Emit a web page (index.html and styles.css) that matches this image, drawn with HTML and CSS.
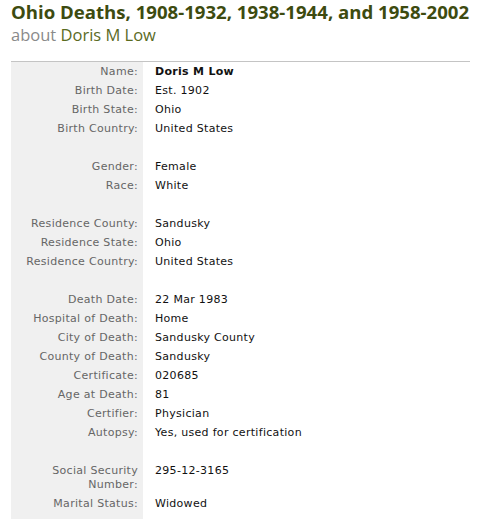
FILE: index.html
```html
<!DOCTYPE html>
<html>
<head>
<meta charset="utf-8">
<link rel="stylesheet" href="styles.css">
</head>
<body>
<div class="page">
  <h1 class="title">Ohio Deaths, 1908-1932, 1938-1944, and 1958-2002</h1>
  <div class="subtitle"><span class="about">about</span> <span class="person">Doris M Low</span></div>
  <table class="record">
    <tr><th>Name:</th><td class="strong">Doris M Low</td></tr>
    <tr><th>Birth Date:</th><td>Est. 1902</td></tr>
    <tr><th>Birth State:</th><td>Ohio</td></tr>
    <tr><th>Birth Country:</th><td>United States</td></tr>
    <tr class="gap"><th></th><td></td></tr>
    <tr><th>Gender:</th><td>Female</td></tr>
    <tr><th>Race:</th><td>White</td></tr>
    <tr class="gap"><th></th><td></td></tr>
    <tr><th>Residence County:</th><td>Sandusky</td></tr>
    <tr><th>Residence State:</th><td>Ohio</td></tr>
    <tr><th>Residence Country:</th><td>United States</td></tr>
    <tr class="gap"><th></th><td></td></tr>
    <tr><th>Death Date:</th><td>22 Mar 1983</td></tr>
    <tr><th>Hospital of Death:</th><td>Home</td></tr>
    <tr><th>City of Death:</th><td>Sandusky County</td></tr>
    <tr><th>County of Death:</th><td>Sandusky</td></tr>
    <tr><th>Certificate:</th><td>020685</td></tr>
    <tr><th>Age at Death:</th><td>81</td></tr>
    <tr><th>Certifier:</th><td>Physician</td></tr>
    <tr><th>Autopsy:</th><td>Yes, used for certification</td></tr>
    <tr class="gap"><th></th><td></td></tr>
    <tr><th>Social Security<br>Number:</th><td>295-12-3165</td></tr>
    <tr><th>Marital Status:</th><td>Widowed</td></tr>
    <tr class="gap"><th></th><td></td></tr>
  </table>
</div>
</body>
</html>
```

FILE: styles.css
```css
html, body {
  margin: 0;
  padding: 0;
  background: #ffffff;
}
.page {
  padding: 0 12px 0 11px;
}
.title {
  margin: 0;
  font-family: "Open Sans", "DejaVu Sans", sans-serif;
  font-weight: 700;
  font-size: 18.6px;
  line-height: 24px;
  color: #3d4b10;
  white-space: nowrap;
}
.subtitle {
  font-family: "Open Sans", "DejaVu Sans", sans-serif;
  font-size: 16.5px;
  line-height: 22px;
}
.about { color: #8a8a8a; }
.person { color: #5b6b1f; }
.record {
  margin-top: 15px;
  width: 459px;
  border-collapse: collapse;
  border-top: 1px solid #c4c4c4;
  font-family: "DejaVu Sans", Verdana, sans-serif;
  font-size: 11px;
  letter-spacing: 0.3px;
  line-height: 14px;
}
.record th {
  width: 127px;
  background: #f0f0f0;
  color: #666666;
  font-weight: normal;
  text-align: right;
  vertical-align: top;
  padding: 2.5px 5px 2.5px 0;
  white-space: nowrap;
}
.record td {
  color: #111111;
  vertical-align: top;
  padding: 2.5px 6px 2.5px 12px;
}
.record td.strong { font-weight: 700; }
.record tr.gap th, .record tr.gap td { height: 14px; }
```
